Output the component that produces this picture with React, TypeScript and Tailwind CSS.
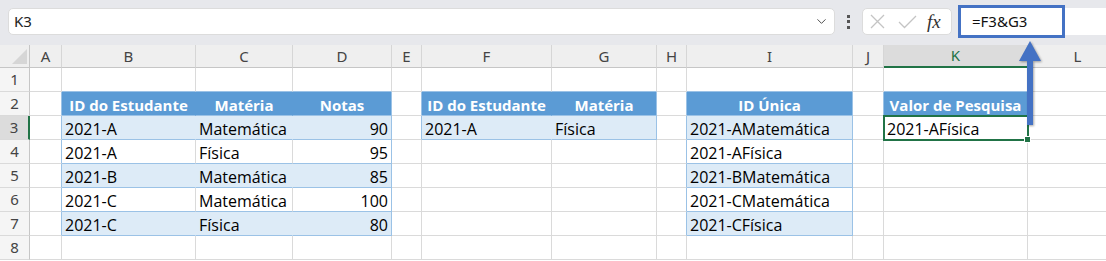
import React from 'react';
import { ChevronDown } from 'lucide-react';

type Table = { c0: number; c1: number; r0: number; r1: number };
type Fill = 'hdr' | 'band' | 'white';

// column letters + widths (index 0 is the row-number gutter)
const COLS = ['', 'A', 'B', 'C', 'D', 'E', 'F', 'G', 'H', 'I', 'J', 'K', 'L'];
const COL_W = [
  'w-[30px]', 'w-[32px]', 'w-[134px]', 'w-[97px]', 'w-[99px]', 'w-[30px]', 'w-[130px]',
  'w-[105px]', 'w-[30px]', 'w-[166px]', 'w-[31px]', 'w-[144px]', 'w-[100px]',
];

const TABLES: Table[] = [
  { c0: 2, c1: 4, r0: 2, r1: 7 },
  { c0: 6, c1: 7, r0: 2, r1: 3 },
  { c0: 9, c1: 9, r0: 2, r1: 7 },
  { c0: 11, c1: 11, r0: 2, r1: 2 },
];

const DATA: Record<number, Record<number, string>> = {
  2: { 2: 'ID do Estudante', 3: 'Matéria', 4: 'Notas', 6: 'ID do Estudante', 7: 'Matéria', 9: 'ID Única', 11: 'Valor de Pesquisa' },
  3: { 2: '2021-A', 3: 'Matemática', 4: '90', 6: '2021-A', 7: 'Física', 9: '2021-AMatemática', 11: '2021-AFísica' },
  4: { 2: '2021-A', 3: 'Física', 4: '95', 9: '2021-AFísica' },
  5: { 2: '2021-B', 3: 'Matemática', 4: '85', 9: '2021-BMatemática' },
  6: { 2: '2021-C', 3: 'Matemática', 4: '100', 9: '2021-CMatemática' },
  7: { 2: '2021-C', 3: 'Física', 4: '80', 9: '2021-CFísica' },
};

const BG: Record<Fill, string> = {
  hdr: 'bg-[#5b9bd5] text-white font-bold text-[15px] justify-center',
  band: 'bg-[#ddebf7] text-black text-[16px]',
  white: 'bg-white text-black text-[16px]',
};
const RIGHT: Record<string, string> = {
  gray: 'border-r-[#dadada]',
  blue: 'border-r-[#9bc2e6]',
  hdr: 'border-r-[#5b9bd5]',
  band: 'border-r-[#ddebf7]',
};
const BOTTOM: Record<string, string> = {
  gray: 'border-b-[#dadada]',
  blue: 'border-b-[#9bc2e6]',
};

const tableAt = (r: number, c: number) =>
  TABLES.find(t => r >= t.r0 && r <= t.r1 && c >= t.c0 && c <= t.c1);

function Cell({ r, c }: { r: number; c: number }) {
  const t = tableAt(r, c);
  let fill: Fill = 'white';
  if (t) fill = r === t.r0 ? 'hdr' : (r - t.r0) % 2 === 1 ? 'band' : 'white';

  let right = 'gray';
  if (t) right = c === t.c1 ? 'blue' : fill === 'white' ? 'gray' : fill;
  else if (tableAt(r, c + 1)) right = 'blue';

  const below = tableAt(r + 1, c);
  const bottom = t || (below && below.r0 === r + 1) ? 'blue' : 'gray';

  const text = DATA[r]?.[c] ?? '';
  const numeric = /^\d+$/.test(text);
  const align = fill === 'hdr' ? '' : numeric ? 'justify-end pr-[3px]' : 'pl-[3px]';
  const selected = r === 3 && c === 11;

  return (
    <div
      className={`${COL_W[c]} h-[24px] shrink-0 border-r border-b flex items-end pb-[0px] leading-[20px] whitespace-nowrap relative ${BG[fill]} ${RIGHT[right]} ${BOTTOM[bottom]} ${align}`}
    >
      {text}
      {selected && (
        <>
          <div className="absolute z-10 -left-[1px] -top-[1px] w-[146px] h-[26px] border-2 border-[#217346]" />
          <div className="absolute z-20 -right-[4px] -bottom-[4px] w-[7px] h-[7px] bg-[#217346] border border-white" />
        </>
      )}
    </div>
  );
}

function ColumnHeaders() {
  return (
    <div className="flex h-[23px] bg-[#efefef] text-[#444] text-[15px] font-['Noto_Sans',sans-serif]">
      {COLS.map((col, i) => {
        if (i === 0) {
          return (
            <div key={i} className={`${COL_W[i]} shrink-0 border-r border-b border-[#c6c6c6] relative`}>
              <svg className="absolute left-[12px] top-[4px]" width="15" height="15" viewBox="0 0 15 15">
                <polygon points="15,0 15,15 0,15" fill="#d6d6d6" />
              </svg>
            </div>
          );
        }
        const active = col === 'K';
        return (
          <div
            key={i}
            className={`${COL_W[i]} shrink-0 flex items-center justify-center border-r border-r-[#d6d6d6] ${
              active ? 'bg-[#dcdcdc] text-[#217346] border-b-2 border-b-[#217346]' : 'border-b border-b-[#c6c6c6]'
            }`}
          >
            {col}
          </div>
        );
      })}
    </div>
  );
}

function FormulaBar() {
  return (
    <div className="h-[45px] bg-[#e7e8ec] flex items-start pt-[8px] pl-[8px] font-['Noto_Sans',sans-serif] text-[#222]">
      <div className="w-[827px] h-[27px] bg-white rounded-[5px] border border-[#dcdcdc] flex items-center justify-between pl-[5px] pr-[5px] text-[15px]">
        <span>K3</span>
        <ChevronDown size={15} strokeWidth={1.5} className="text-[#444]" />
      </div>
      <div className="w-[27px] h-[27px] flex flex-col items-center justify-center gap-[2.5px]">
        <span className="w-[3px] h-[3px] bg-[#555]" />
        <span className="w-[3px] h-[3px] bg-[#555]" />
        <span className="w-[3px] h-[3px] bg-[#555]" />
      </div>
      <div className="w-[90px] h-[27px] bg-white rounded-[5px] border border-[#dcdcdc] flex items-center pl-[6px] pr-[5px]">
        <svg width="17" height="17" viewBox="0 0 17 17" className="mr-[12px]">
          <path d="M2 2 L15 15 M15 2 L2 15" stroke="#c4c4c4" strokeWidth="1.3" fill="none" />
        </svg>
        <svg width="19" height="15" viewBox="0 0 19 15" className="mr-[10px]">
          <path d="M1 8 L6.5 13.5 L18 2" stroke="#c4c4c4" strokeWidth="1.3" fill="none" />
        </svg>
        <span className="font-['Liberation_Serif',serif] italic text-[19px] leading-none text-[#333]">fx</span>
      </div>
      <div className="flex-1 ml-[6px] h-[27px] bg-white rounded-l-[5px] relative">
        <div className="absolute left-0 -top-[3px] w-[107px] h-[33px] border-[3px] border-[#4472c4] flex items-center pl-[11px] text-[15px] text-[#111]">
          =F3&amp;G3
        </div>
      </div>
    </div>
  );
}

export default function App() {
  const rows = [1, 2, 3, 4, 5, 6, 7, 8];
  return (
    <div className="w-[1106px] h-[261px] overflow-hidden bg-white relative">
      <FormulaBar />
      <ColumnHeaders />
      {rows.map(r => (
        <div key={r} className="flex">
          <div
            className={`${COL_W[0]} h-[24px] shrink-0 flex items-center justify-center text-[15px] text-[#444] font-['Noto_Sans',sans-serif] border-b border-b-[#dadada] ${
              r === 3 ? 'bg-[#dcdcdc] border-r-2 border-r-[#217346]' : 'bg-[#f5f5f5] border-r border-r-[#c6c6c6]'
            }`}
          >
            {r}
          </div>
          <div className="flex font-['Open_Sans',sans-serif]">
            {COLS.slice(1).map((_, i) => (
              <Cell key={i} r={r} c={i + 1} />
            ))}
          </div>
        </div>
      ))}

      {/* callout arrow from K3 to the formula bar */}
      <svg
        className="absolute z-30 left-[1018px] top-[38px] drop-shadow-[1px_1px_1px_rgba(0,0,0,0.35)]"
        width="26"
        height="92"
        viewBox="0 0 26 92"
      >
        <polygon points="12,3 23,23 15,23 15,87 9,87 9,23 1,23" fill="#4472c4" />
      </svg>
    </div>
  );
}
